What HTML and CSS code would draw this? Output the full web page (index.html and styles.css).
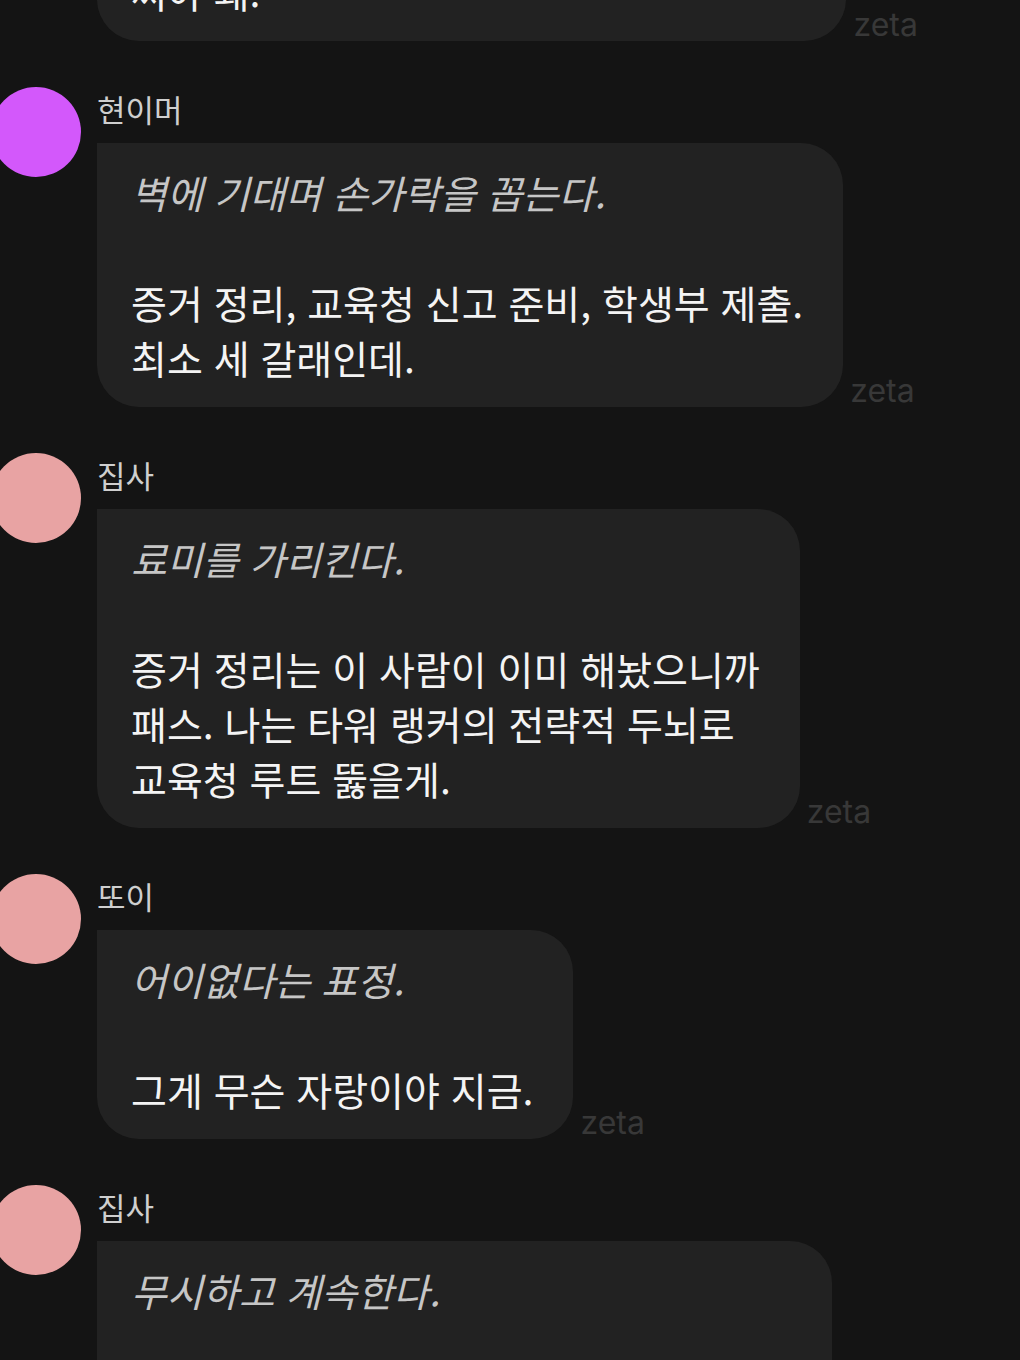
FILE: index.html
```html
<!DOCTYPE html>
<html lang="ko">
<head>
    <meta charset="UTF-8">
    <meta name="viewport" content="width=device-width, initial-scale=1.0">
    <title>Chat</title>
    <link rel="stylesheet" href="styles.css">
</head>
<body>
    <div class="chat">
        <!-- 이전 메시지 (위로 잘림) -->
        <div class="msg msg-cont">
            <div class="msg-row">
                <div class="bubble">
                    <p class="say">그럼 역할부터 정하자 누가 뭘 맡을지 빨리<br>써야 돼.</p>
                </div>
                <span class="zeta">zeta</span>
            </div>
        </div>

        <div class="msg">
            <div class="avatar purple"></div>
            <div class="msg-body">
                <div class="name">현이머</div>
                <div class="msg-row">
                    <div class="bubble">
                        <p class="act">벽에 기대며 손가락을 꼽는다.</p>
                        <p class="say">증거 정리, 교육청 신고 준비, 학생부 제출.<br>최소 세 갈래인데.</p>
                    </div>
                    <span class="zeta">zeta</span>
                </div>
            </div>
        </div>

        <div class="msg">
            <div class="avatar pink"></div>
            <div class="msg-body">
                <div class="name">집사</div>
                <div class="msg-row">
                    <div class="bubble">
                        <p class="act">료미를 가리킨다.</p>
                        <p class="say">증거 정리는 이 사람이 이미 해놨으니까<br>패스. 나는 타워 랭커의 전략적 두뇌로<br>교육청 루트 뚫을게.</p>
                    </div>
                    <span class="zeta">zeta</span>
                </div>
            </div>
        </div>

        <div class="msg">
            <div class="avatar pink"></div>
            <div class="msg-body">
                <div class="name">또이</div>
                <div class="msg-row">
                    <div class="bubble">
                        <p class="act">어이없다는 표정.</p>
                        <p class="say">그게 무슨 자랑이야 지금.</p>
                    </div>
                    <span class="zeta">zeta</span>
                </div>
            </div>
        </div>

        <div class="msg">
            <div class="avatar pink"></div>
            <div class="msg-body">
                <div class="name">집사</div>
                <div class="msg-row">
                    <div class="bubble">
                        <p class="act">무시하고 계속한다.</p>
                        <p class="say">학생부 제출은 현이머, 네가 맡아. 너 그거<br>잘하잖아. 또이는 옆에서 서류 챙기고.</p>
                    </div>
                    <span class="zeta">zeta</span>
                </div>
            </div>
        </div>
    </div>
</body>
</html>
```

FILE: styles.css
```css
body {
    margin: 0;
    background-color: #141414;
    font-family: "Noto Sans CJK KR", "Noto Sans", sans-serif;
    overflow: hidden;
}

.chat {
    display: flex;
    flex-direction: column;
    gap: 46px;
    margin-top: -113px;
}

.msg {
    display: flex;
    gap: 16px;
    margin-left: -9px;
}

.msg-cont {
    margin-left: 97px;
}

.avatar {
    width: 90px;
    height: 90px;
    border-radius: 50%;
    flex-shrink: 0;
}

.avatar.purple {
    background-color: #d358fb;
}

.avatar.pink {
    background-color: #e8a3a3;
}

.msg-body {
    display: flex;
    flex-direction: column;
}

.name {
    font-size: 31px;
    line-height: 44px;
    margin-bottom: 12px;
    color: #cfcfcf;
}

.msg-row {
    display: flex;
    align-items: flex-end;
    gap: 7px;
}

.bubble {
    background-color: #222222;
    border-radius: 0 42px 42px 42px;
    padding: 22px 40px 22px 34px;
    font-size: 39px;
    line-height: 55px;
}

.bubble p {
    margin: 0;
}

.act {
    font-style: italic;
    color: #c6c6c6;
    margin-bottom: 55px !important;
}

.say {
    color: #f4f4f4;
}

.zeta {
    font-family: "Inter", sans-serif;
    font-size: 32px;
    line-height: 30px;
    color: #383838;
    margin-bottom: 1px;
}
```
